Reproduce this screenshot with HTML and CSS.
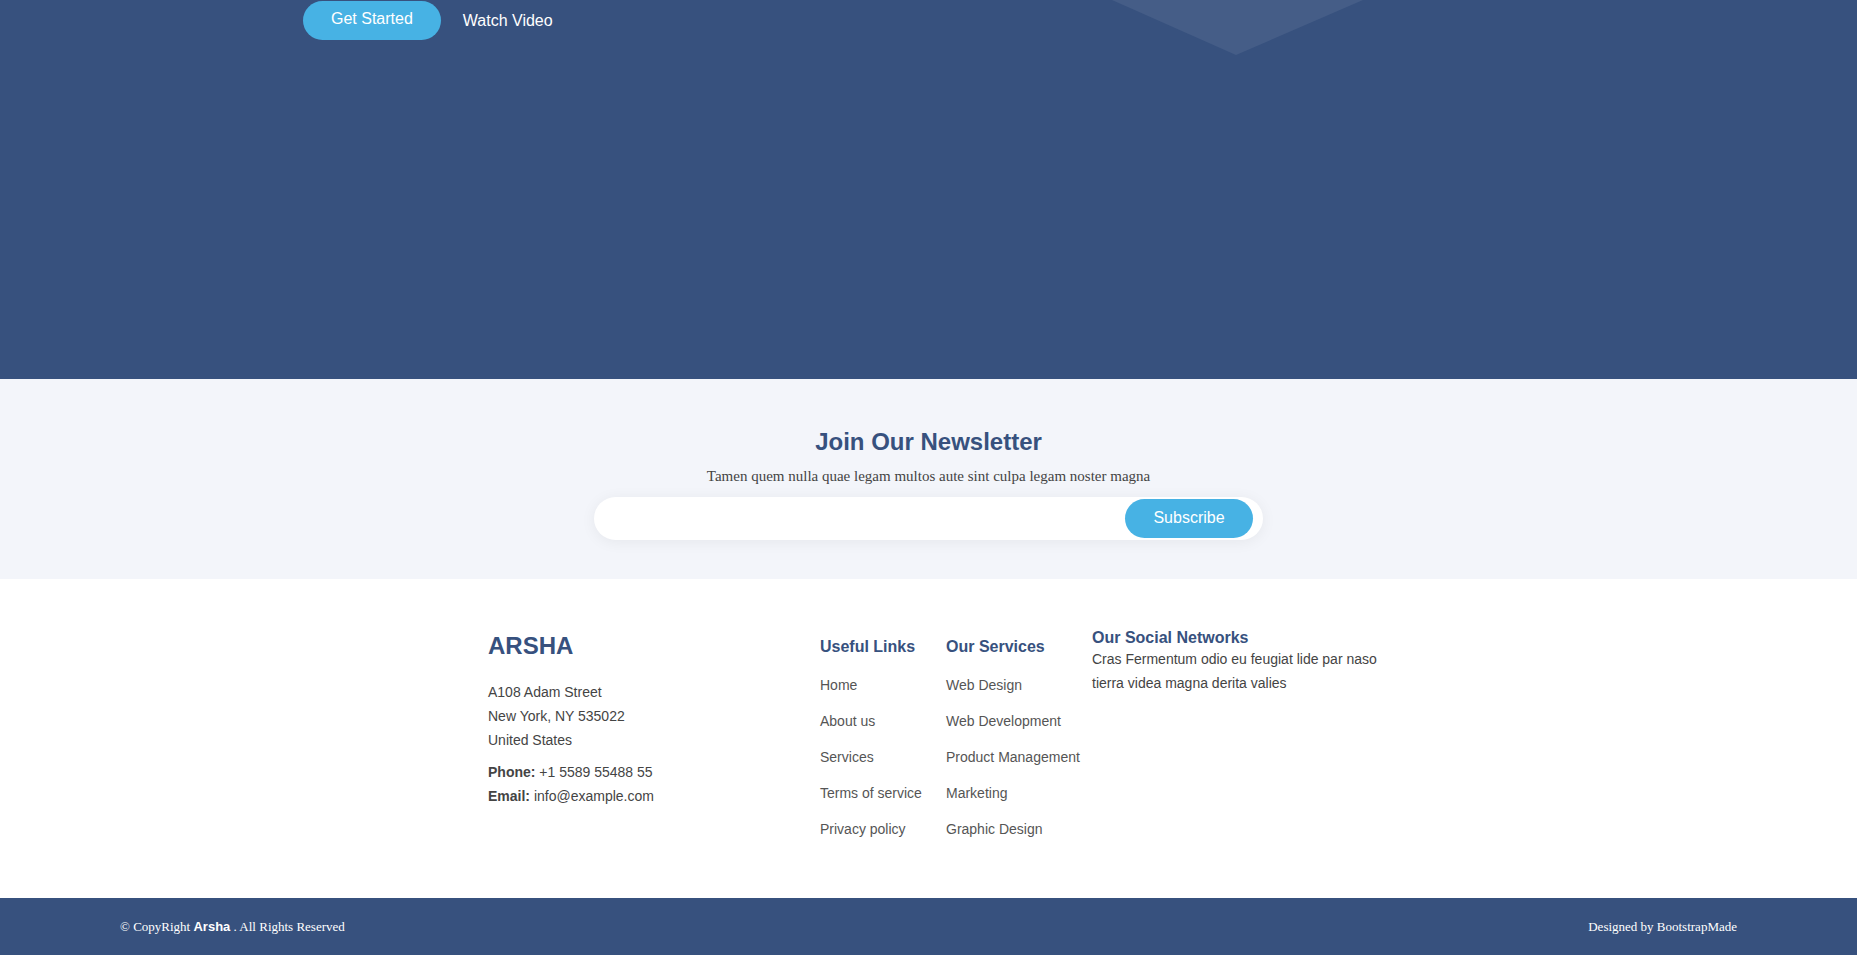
FILE: index.html
```html
<!DOCTYPE html>
<html lang="en">
<head>
<meta charset="utf-8">
<title>Arsha</title>
<link rel="stylesheet" href="styles.css">
</head>
<body>
<section class="hero">
  <svg class="hero-shape" width="260" height="60" viewBox="0 0 260 60" aria-hidden="true">
    <polygon points="0,0 251,0 124,55" fill="rgba(255,255,255,0.07)"/>
  </svg>
  <div class="hero-actions">
    <a class="btn-get-started" href="#">Get Started</a>
    <a class="btn-watch-video" href="#">Watch Video</a>
  </div>
</section>

<section class="newsletter">
  <h4 class="newsletter-title">Join Our Newsletter</h4>
  <p class="newsletter-text">Tamen quem nulla quae legam multos aute sint culpa legam noster magna</p>
  <form class="newsletter-form">
    <input class="newsletter-input" type="email" name="email">
    <button class="newsletter-submit" type="button">Subscribe</button>
  </form>
</section>

<footer class="footer-top">
  <div class="footer-inner">
    <div class="col col-contact">
      <h3 class="brand">ARSHA</h3>
      <p class="contact-lines">A108 Adam Street<br>New York, NY 535022<br>United States</p>
      <p class="contact-lines contact-info"><strong>Phone:</strong> +1 5589 55488 55<br><strong>Email:</strong> info@example.com</p>
    </div>
    <div class="col col-links">
      <h4 class="col-title">Useful Links</h4>
      <ul class="link-list">
        <li><a href="#">Home</a></li>
        <li><a href="#">About us</a></li>
        <li><a href="#">Services</a></li>
        <li><a href="#">Terms of service</a></li>
        <li><a href="#">Privacy policy</a></li>
      </ul>
    </div>
    <div class="col col-services">
      <h4 class="col-title">Our Services</h4>
      <ul class="link-list">
        <li><a href="#">Web Design</a></li>
        <li><a href="#">Web Development</a></li>
        <li><a href="#">Product Management</a></li>
        <li><a href="#">Marketing</a></li>
        <li><a href="#">Graphic Design</a></li>
      </ul>
    </div>
    <div class="col col-social">
      <h4 class="col-title">Our Social Networks</h4>
      <p class="social-text">Cras Fermentum odio eu feugiat lide par naso tierra videa magna derita valies</p>
    </div>
  </div>
</footer>

<div class="footer-bottom">
  <div class="copyright">&copy; CopyRight <strong class="copy-brand">Arsha</strong> . All Rights Reserved</div>
  <div class="credits">Designed by BootstrapMade</div>
</div>
</body>
</html>
```

FILE: styles.css
```css
* { box-sizing: border-box; }
html, body { margin: 0; padding: 0; }
body {
  font-family: "Liberation Serif", "Times New Roman", serif;
  color: #444444;
  background: #ffffff;
}
a { text-decoration: none; }

/* Hero */
.hero {
  position: relative;
  height: 379px;
  background: #37517e;
  padding: 1px 0 0 303px;
  overflow: hidden;
}
.hero-shape {
  position: absolute;
  left: 1112px;
  top: 0;
}
.hero-actions {
  position: relative;
  display: flex;
  align-items: flex-start;
}
.btn-get-started {
  font-family: "Liberation Sans", Arial, sans-serif;
  font-size: 16px;
  line-height: 19px;
  color: #ffffff;
  background: #47b2e4;
  padding: 8px 28px 12px;
  border-radius: 50px;
}
.btn-watch-video {
  font-family: "Liberation Sans", Arial, sans-serif;
  font-size: 16px;
  line-height: 19px;
  color: #ffffff;
  margin-left: 22px;
  padding-top: 10px;
}

/* Newsletter */
.newsletter {
  height: 200px;
  background: #f3f5fa;
  padding-top: 49px;
  text-align: center;
}
.newsletter-title {
  margin: 0;
  font-family: "Liberation Sans", Arial, sans-serif;
  font-size: 24px;
  line-height: 28px;
  font-weight: 700;
  color: #37517e;
}
.newsletter-text {
  margin: 11px 0 0;
  font-size: 15px;
  line-height: 18px;
  color: #444444;
}
.newsletter-form {
  width: 669px;
  height: 43px;
  margin: 12px auto 0;
  background: #ffffff;
  border-radius: 50px;
  box-shadow: 0 2px 15px rgba(0, 0, 0, 0.06);
  display: flex;
  align-items: center;
  padding: 2px 10px 2px 20px;
}
.newsletter-input {
  flex: 1;
  min-width: 0;
  border: 0;
  outline: none;
  background: transparent;
  height: 100%;
}
.newsletter-submit {
  width: 128px;
  height: 39px;
  border: 0;
  border-radius: 50px;
  background: #47b2e4;
  color: #ffffff;
  font-family: "Liberation Sans", Arial, sans-serif;
  font-size: 16px;
  padding: 0 0 2px;
}

/* Footer top */
.footer-top {
  height: 319px;
  background: #ffffff;
  padding-top: 49px;
  font-family: "Liberation Sans", Arial, sans-serif;
  font-size: 14px;
  color: #444444;
}
.footer-inner {
  display: flex;
  align-items: flex-start;
  margin-left: calc(50% - 440.5px);
}
.col-contact { width: 332px; margin-top: 3px; }
.col-links { width: 126px; margin-top: 9px; }
.col-services { width: 146px; margin-top: 9px; }
.col-social { width: 300px; }

.brand {
  margin: 0;
  font-size: 24px;
  line-height: 29px;
  font-weight: 700;
  color: #37517e;
}
.contact-lines {
  margin: 20px 0 0;
  line-height: 24px;
  color: #444444;
}
.contact-info { margin-top: 8px; }
.contact-info strong { color: #444444; }

.col-title {
  margin: 0;
  font-size: 16px;
  line-height: 19px;
  font-weight: 700;
  color: #37517e;
}
.link-list {
  list-style: none;
  margin: 11px 0 0;
  padding: 0;
}
.link-list li {
  height: 36px;
  line-height: 36px;
  white-space: nowrap;
}
.link-list a { color: #555555; }

.social-text {
  margin: 0;
  line-height: 24px;
  color: #444444;
}

/* Footer bottom */
.footer-bottom {
  height: 57px;
  background: #37517e;
  color: #ffffff;
  font-size: 13px;
  line-height: 57px;
  padding: 0 120px;
  display: flex;
  justify-content: space-between;
}
.copy-brand {
  font-family: "Liberation Sans", Arial, sans-serif;
  font-size: 13px;
}
```
